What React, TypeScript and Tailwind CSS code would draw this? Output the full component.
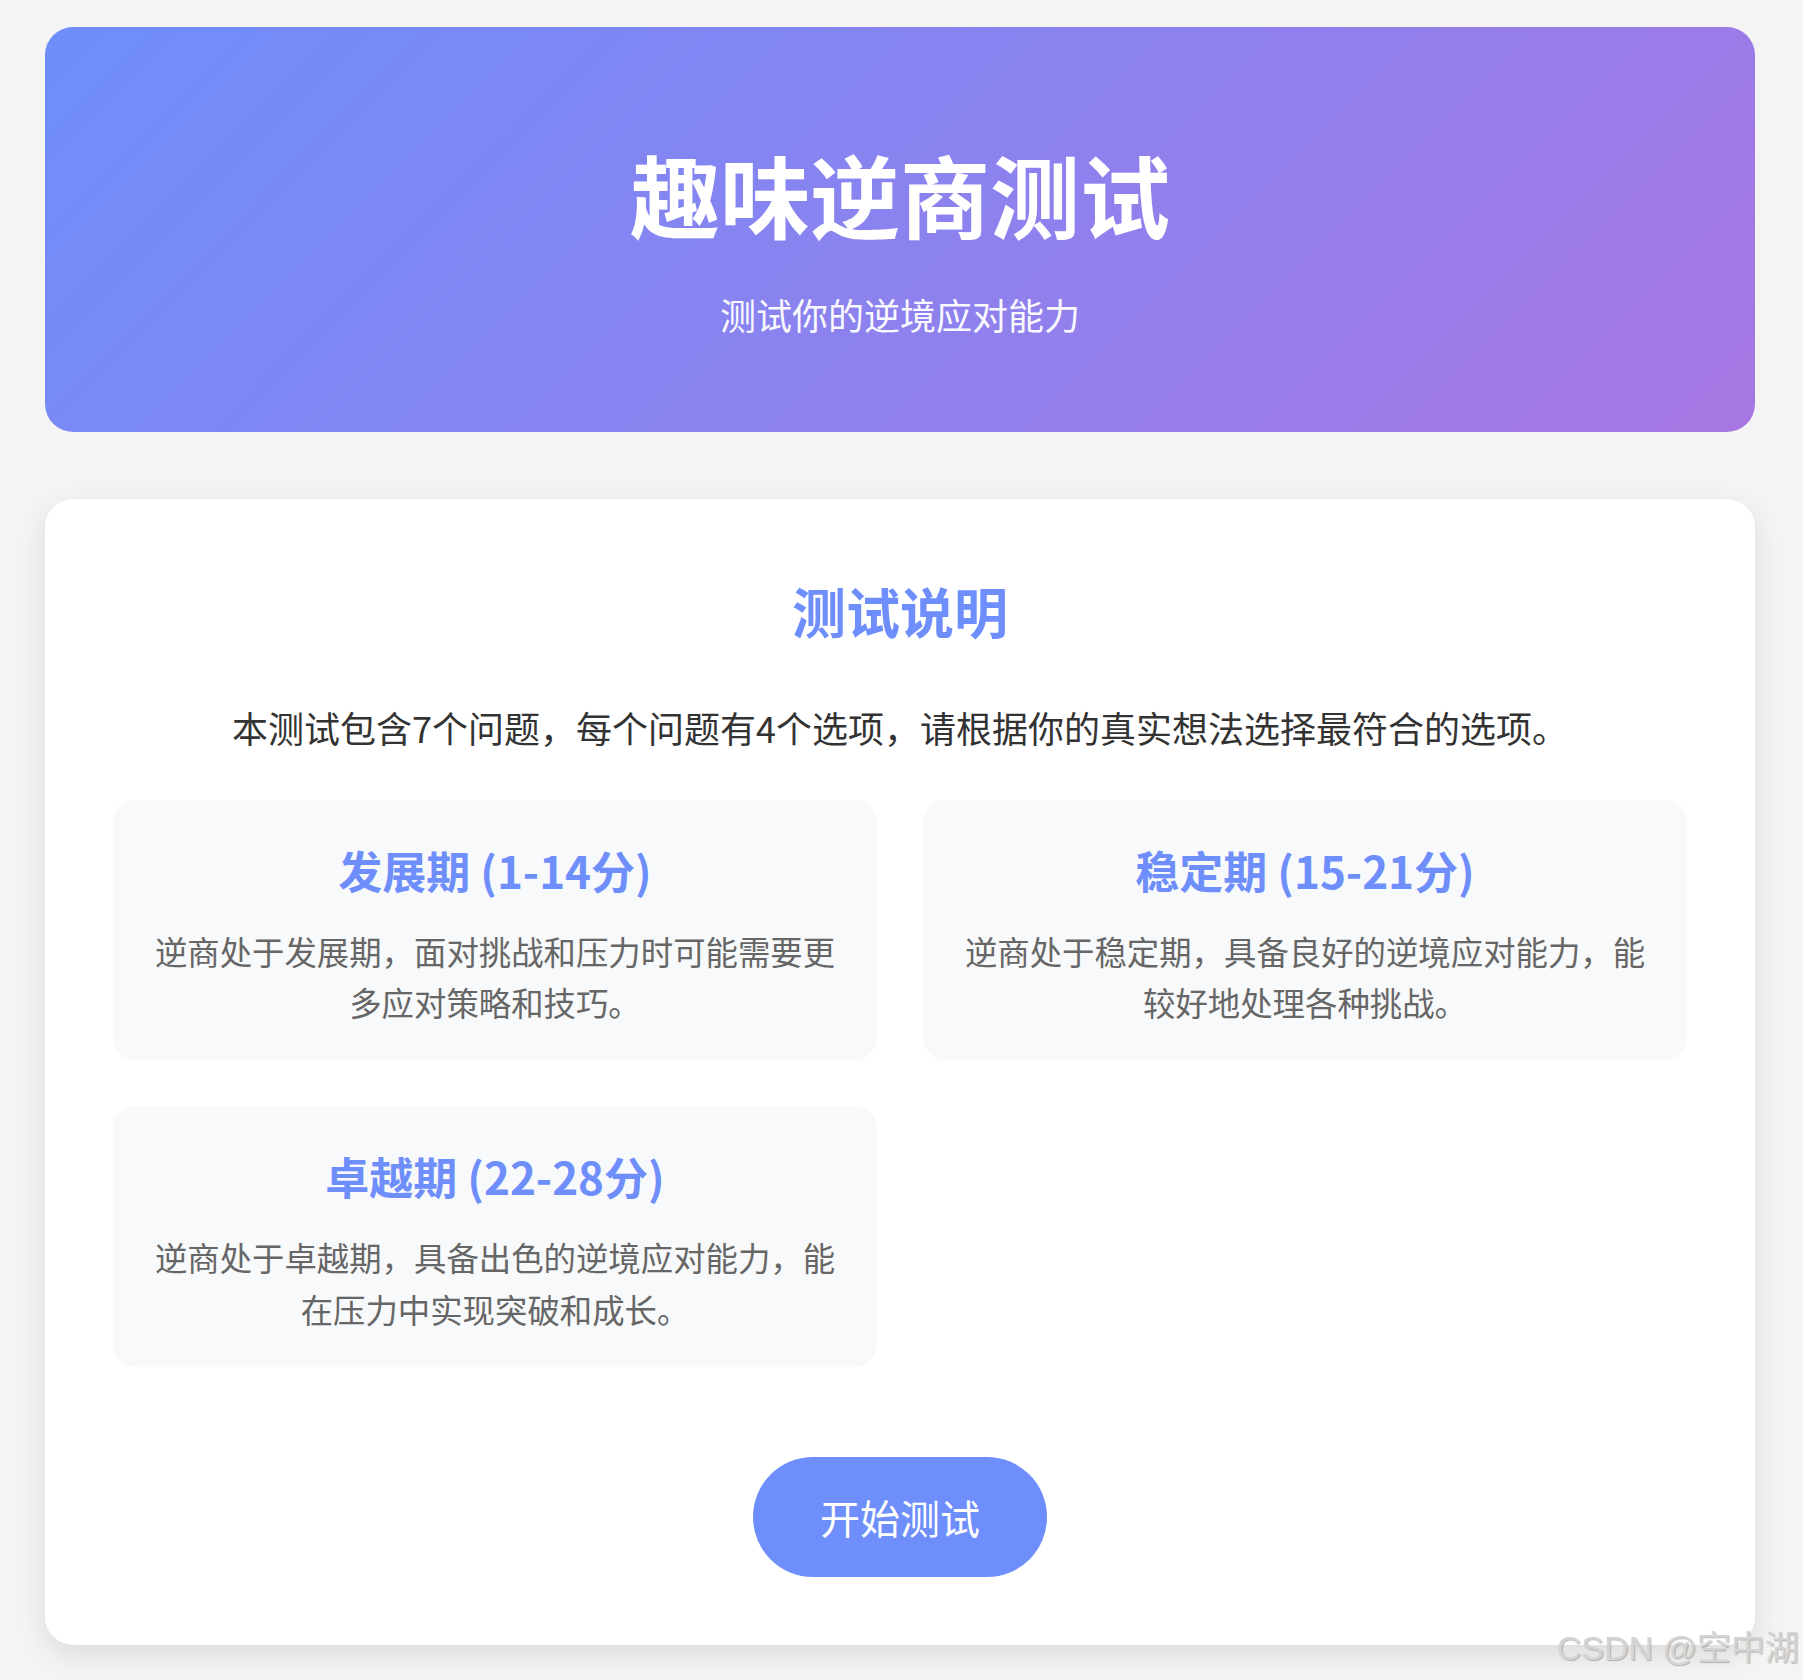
import React from "react";

type Level = {
  title: string;
  desc: string;
};

const levels: Level[] = [
  {
    title: "发展期 (1-14分)",
    desc: "逆商处于发展期，面对挑战和压力时可能需要更多应对策略和技巧。",
  },
  {
    title: "稳定期 (15-21分)",
    desc: "逆商处于稳定期，具备良好的逆境应对能力，能较好地处理各种挑战。",
  },
  {
    title: "卓越期 (22-28分)",
    desc: "逆商处于卓越期，具备出色的逆境应对能力，能在压力中实现突破和成长。",
  },
];

const LevelCard: React.FC<{ level: Level }> = ({ level }) => (
  <div className="rounded-[22px] bg-[#f8f9fa] px-[35px] pt-[44px] pb-[32px] text-center">
    <h3 className="mb-[29px] text-[44px] leading-[52px] font-bold text-[#6e8efb]">
      {level.title}
    </h3>
    <p className="text-[32.4px] leading-[1.6] text-[#666]">{level.desc}</p>
  </div>
);

export default function App() {
  return (
    <div className="relative min-h-[1680px] bg-[#f4f4f4] pt-[27px] font-['Noto_Sans_CJK_SC','Microsoft_YaHei',sans-serif]">
      <div className="ml-[45px] w-[1710px]">
        {/* header */}
        <div className="rounded-[28px] bg-[linear-gradient(135deg,#6e8efb,#a777e3)] pt-[112px] pb-[96px] text-center text-white">
          <h1 className="text-[90px] leading-[108px] font-bold">趣味逆商测试</h1>
          <p className="mt-[46px] text-[36px] leading-[43px] opacity-95">
            测试你的逆境应对能力
          </p>
        </div>

        {/* intro card */}
        <div className="mt-[67px] rounded-[28px] bg-white p-[68px] shadow-[0_10px_30px_rgba(0,0,0,0.1)]">
          <h2 className="mb-[44px] text-center text-[54px] leading-[88px] font-bold text-[#6e8efb]">
            测试说明
          </h2>
          <p className="mb-[43px] text-center text-[36px] leading-[57.6px] text-[#333]">
            本测试包含7个问题，每个问题有4个选项，请根据你的真实想法选择最符合的选项。
          </p>

          <div className="grid grid-cols-2 gap-[46px]">
            {levels.map((lv) => (
              <LevelCard key={lv.title} level={lv} />
            ))}
          </div>

          <div className="mt-[90px] flex justify-center">
            <button className="h-[120px] w-[294px] cursor-pointer rounded-full bg-[#6e8efb] text-[40px] leading-[58px] text-white">
              开始测试
            </button>
          </div>
        </div>
      </div>

      <div className="absolute right-[4px] bottom-[12px] font-['Liberation_Sans','Noto_Sans_CJK_SC',sans-serif] text-[34px] leading-[40px] text-[#d4d4d4] [text-shadow:1px_1px_1px_rgba(0,0,0,0.25)]">
        CSDN @空中湖
      </div>
    </div>
  );
}
